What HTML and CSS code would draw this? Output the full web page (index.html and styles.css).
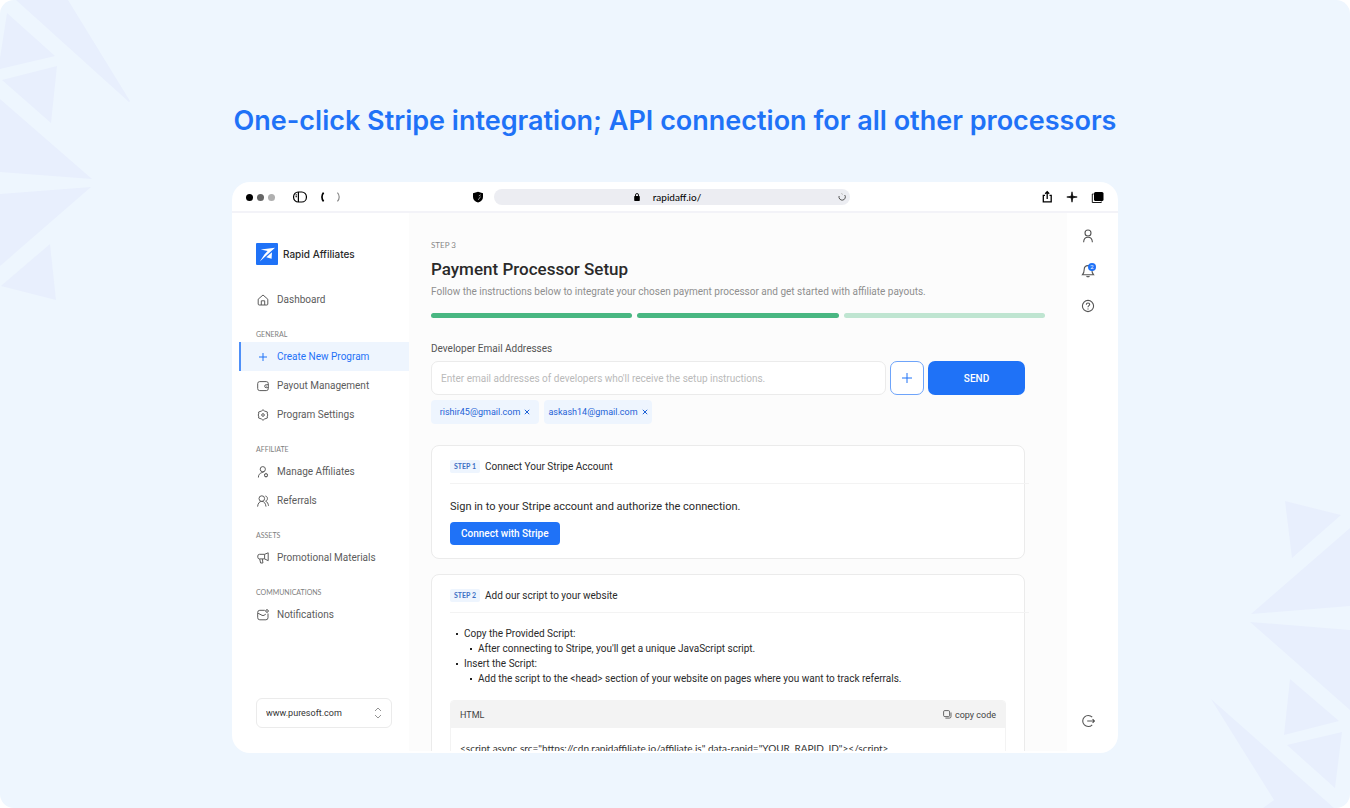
FILE: index.html
```html
<!DOCTYPE html>
<html lang="en">
<head>
<meta charset="utf-8">
<title>Rapid Affiliates – Payment Processor Setup</title>
<link rel="stylesheet" href="styles.css">
</head>
<body>
<div class="stage">
  <svg class="shards shards-left" viewBox="0 0 140 310" aria-hidden="true">
    <path d="M16 0H68L130 101 129 102ZM7 13 55 56 0 69V58ZM2 80 57 66 51 123ZM0 99 92 179 0 172ZM0 194 91 187 0 266ZM50 244 56 300 1 286Z"/>
  </svg>
  <svg class="shards shards-right" viewBox="0 0 160 328" aria-hidden="true">
    <path d="M95 21 151 35 102 78ZM160 48 61 134 160 126ZM60 142 160 150V230ZM100 199 149 241 94 255ZM97 265 152 252 145 308ZM21 219 84 320 73 328H144Z"/>
  </svg>

  <h1 class="headline">One-click Stripe integration; API connection for all other processors</h1>

  <div class="window">
    <header class="browser-bar">
      <div class="bar-left">
        <span class="dots"><i class="dot"></i><i class="dot dot-mid"></i><i class="dot dot-light"></i></span>
        <svg class="ico-panel" width="16" height="12" viewBox="0 0 16 12" fill="none" stroke="#000" stroke-width="1.2"><rect x="1.6" y="1" width="12.8" height="10" rx="4.6"/><path d="M6.4 1v10M3.6 3.8h1.2M3.6 5.6h1.2"/></svg>
        <svg class="ico-back" width="24" height="12" viewBox="0 0 24 12" fill="none" stroke="#000"><path d="M5.600 1.600C3.400 4 3.400 8 5.600 10.400" stroke-width="1.700"/><path d="M19.400 1.600C21.800 4 21.800 8 19.400 10.400" stroke="#888" stroke-width="1.200"/></svg>
      </div>
      <div class="bar-center">
        <svg width="12" height="12" viewBox="0 0 12 12"><path d="M6 .8 11 2.300V6C11 8.700 8.900 10.700 6 11.600 3.100 10.700 1 8.700 1 6V2.300Z"/><path d="M8.700 3.800 6.800 5M8.500 5.600 6.300 8.800" stroke="#fff" stroke-width=".6"/></svg>
        <div class="address">
          <span class="address-text">
            <svg width="8" height="10" viewBox="0 0 8 10"><rect x="1.200" y="4" width="5.600" height="5" rx=".7"/><path d="M2.500 4.400V3a1.500 1.500 0 0 1 3 0v1.400" fill="none" stroke="#000" stroke-width=".9"/></svg>
            rapidaff.io/
          </span>
          <svg class="ico-reload" width="10" height="10" viewBox="0 0 10 10" fill="none" stroke="#444" stroke-width=".9"><path d="M7.700 3A3.200 3.200 0 1 1 2.100 4"/><path d="M4.300 1.500 5.800 2.400" stroke="#aaa"/></svg>
        </div>
      </div>
      <div class="bar-right">
        <svg width="12" height="14" viewBox="0 0 12 14" fill="none" stroke="#000" stroke-width="1.300"><path d="M4 5.300H2.300v6.600h7.900V5.300H8.500M6.200 9V2M4.200 3.700l2-2 2 2"/></svg>
        <svg width="12" height="12" viewBox="0 0 12 12"><path d="M6 .8 6.800 5.200 11.200 6 6.800 6.800 6 11.200 5.200 6.800.8 6 5.200 5.200Z" stroke="#000" stroke-width=".7"/></svg>
        <svg width="13" height="13" viewBox="0 0 13 13"><rect x="3" y="1" width="9.500" height="9" rx="1.500"/><path d="M2.700 3H1.300v8.500h9V10.500" fill="none" stroke="#000" stroke-width=".9"/></svg>
      </div>
    </header>

    <div class="app">
      <aside class="sidebar">
        <div class="brand">
          <svg width="22" height="22" viewBox="0 0 22 22"><rect width="22" height="22" rx="1" fill="#1f72f7"/><path d="M4.700 6.500 19 4.800 11.200 11.800 3.800 18.400 8.600 11.200 11.600 8Z" fill="#fff"/><path d="M10.300 14.300 13.900 11 16 9.300 15.600 15.700Z" fill="#fff"/></svg>
          <span>Rapid Affiliates</span>
        </div>
        <nav class="nav">
          <a class="nav-item" href="#"><svg viewBox="0 0 12 12"><path d="M1.200 5.200 6 1l4.800 4.200V10q0 1-1 1H2.200q-1 0-1-1ZM4.300 11V6.800h3.400V11"/></svg>Dashboard</a>
          <h2 class="nav-label">GENERAL</h2>
          <a class="nav-item active" href="#"><svg viewBox="0 0 12 12"><path d="M6 2v8M2 6h8"/></svg>Create New Program</a>
          <a class="nav-item" href="#"><svg viewBox="0 0 12 12"><rect x=".7" y="1.600" width="10.600" height="9" rx="2"/><path d="M11.300 4.700H9.200a1.500 1.500 0 0 0 0 3h2.100M9 6.200h.7"/></svg>Payout Management</a>
          <a class="nav-item" href="#"><svg viewBox="0 0 12 12"><path d="M6 .7 7.500 2 10.400 3 10.200 5 11 6 10.200 7 10.400 9 7.500 10 6 11.300 4.500 10 1.600 9 1.800 7 1 6 1.800 5 1.600 3 4.500 2Z" stroke-linejoin="round"/><circle cx="6" cy="6" r="1.300"/></svg>Program Settings</a>
          <h2 class="nav-label">AFFILIATE</h2>
          <a class="nav-item" href="#"><svg viewBox="0 0 12 12"><circle cx="5.800" cy="3.200" r="2.600"/><path d="M1.400 11.500C1.400 8.600 2.600 7.600 4.800 6.600L7.300 5.600"/><circle cx="9" cy="9.200" r="1.500"/><path d="M9 6.900v.8M9 10.700v.8M7 8l.7.500M10.300 9.900l.7.500M7 10.400l.7-.5M10.300 8.500 11 8"/></svg>Manage Affiliates</a>
          <a class="nav-item" href="#"><svg viewBox="0 0 12 12"><circle cx="4.800" cy="3.600" r="2.800"/><path d="M.6 11.600C1 8 2.500 6.400 4.800 6.400S8.500 8 9 11.600M8.400 1C11.200 1.500 11 5.500 8.600 6.200 10.400 7 11.200 8.500 11.500 10.800"/></svg>Referrals</a>
          <h2 class="nav-label">ASSETS</h2>
          <a class="nav-item" href="#"><svg viewBox="0 0 12 12"><path d="M7.600 2.300H2.500Q.8 2.300.8 4v1.200q0 1.700 1.700 1.700h5.100M7.600 2.300 11.200.8v7.900L7.600 6.900ZM2.700 7l.9 4h2.300L5.400 7"/></svg>Promotional Materials</a>
          <h2 class="nav-label">COMMUNICATIONS</h2>
          <a class="nav-item" href="#"><svg viewBox="0 0 12 12"><path d="M7.800 1.300H2.800q-2.100 0-2.100 2.100v5.300q0 2.100 2.100 2.100h6.100q2.100 0 2.100-2.100V4.500M1 4.200 5 6.300q1 .5 2 0L8.800 5.200"/><circle cx="10" cy="2" r="1.300"/></svg>Notifications</a>
        </nav>
        <div class="site-picker">
          <select aria-label="Website"><option>www.puresoft.com</option></select>
          <svg width="8" height="12" viewBox="0 0 8 12" fill="none" stroke="#888" stroke-width=".9"><path d="M1 4 4 1 7 4M1 8l3 3 3-3"/></svg>
        </div>
      </aside>

      <main class="main">
        <p class="eyebrow">STEP 3</p>
        <h2 class="page-title">Payment Processor Setup</h2>
        <p class="page-sub">Follow the instructions below to integrate your chosen payment processor and get started with affiliate payouts.</p>
        <div class="progress"><span></span><span></span><span class="pending"></span></div>

        <div class="column">
          <label class="field-label" for="emails">Developer Email Addresses</label>
          <form class="email-row">
            <input id="emails" type="text" placeholder="Enter email addresses of developers who'll receive the setup instructions.">
            <button class="add" type="button" aria-label="Add email"><svg width="12" height="12" viewBox="0 0 12 12" stroke="#1f72f7" stroke-width="1"><path d="M6 1v10M1 6h10"/></svg></button>
            <button class="send" type="button">SEND</button>
          </form>
          <div class="chips">
            <button class="chip" type="button">rishir45@gmail.com <svg viewBox="0 0 6 6"><path d="M.8.8l4.400 4.400M5.200.8.8 5.200"/></svg></button>
            <button class="chip" type="button">askash14@gmail.com <svg viewBox="0 0 6 6"><path d="M.8.8l4.400 4.400M5.200.8.8 5.200"/></svg></button>
          </div>

          <section class="card">
            <div class="card-head"><span class="badge">STEP 1</span><h3>Connect Your Stripe Account</h3></div>
            <p class="lead">Sign in to your Stripe account and authorize the connection.</p>
            <button class="connect" type="button">Connect with Stripe</button>
          </section>

          <section class="card">
            <div class="card-head"><span class="badge">STEP 2</span><h3>Add our script to your website</h3></div>
            <ul class="steps">
              <li>Copy the Provided Script:
                <ul><li>After connecting to Stripe, you'll get a unique JavaScript script.</li></ul>
              </li>
              <li>Insert the Script:
                <ul><li>Add the script to the &lt;head&gt; section of your website on pages where you want to track referrals.</li></ul>
              </li>
            </ul>
            <div class="code">
              <div class="code-head"><span>HTML</span>
                <button class="copy" type="button"><svg width="9" height="9" viewBox="0 0 9 9" fill="none" stroke="#444" stroke-width=".8"><rect x=".6" y=".6" width="6" height="6" rx="1.200"/><path d="M8 2.500v4q0 1.600-1.600 1.600h-4"/></svg>copy code</button>
              </div>
              <pre><code>&lt;script async src="https://cdn.rapidaffiliate.io/affiliate.js" data-rapid="YOUR_RAPID_ID"&gt;&lt;/script&gt;</code></pre>
            </div>
          </section>
        </div>
      </main>

      <aside class="rail">
        <button type="button" aria-label="Profile"><svg viewBox="0 0 14 14"><circle cx="7" cy="4" r="3"/><path d="M2.600 13.200C2.800 9.800 4.400 8.300 7 8.300s4.200 1.500 4.400 4.900"/></svg></button>
        <button type="button" aria-label="Notifications" class="bell"><svg viewBox="0 0 14 14"><path d="M7 1.600C4.300 1.600 3.200 3.500 3.200 5.600c0 3-.6 3.800-1.800 5.200h11.200C11.400 9.400 10.800 8.600 10.800 5.600M5.500 12.200q1.500 1.200 3 0M7 1.600h1"/></svg><span class="count">2</span></button>
        <button type="button" aria-label="Help"><svg viewBox="0 0 14 14"><circle cx="7" cy="7" r="5.600"/><path d="M5.300 5.700C5.300 3.300 8.700 3.500 8.700 5.500 8.700 6.700 7 6.700 7 8.200M7 9.500v.9"/></svg></button>
        <button type="button" aria-label="Log out" class="logout"><svg viewBox="0 0 14 14"><path d="M11.200 3.200A5.500 5.500 0 1 0 11.200 10.800M6.200 7h7M11.600 5.200 13.400 7l-1.800 1.800"/></svg></button>
      </aside>
    </div>
  </div>
</div>
</body>
</html>
```

FILE: styles.css
```css
* { box-sizing: border-box; }

body {
  margin: 0;
  background: #fff;
  font-family: Roboto, "Liberation Sans", sans-serif;
  font-size: 10px;
  color: #2a2a2a;
}

h1, h2, h3, p, ul, pre { margin: 0; padding: 0; font-weight: 400; }
h3 { font-size: 10px; }
button, input, select { font: inherit; color: inherit; margin: 0; }
button { border: 0; background: none; padding: 0; cursor: pointer; }

.stage {
  position: relative;
  display: flex;
  flex-direction: column;
  gap: 41px;
  height: 100vh;
  padding: 101px 232px 55px;
  background: #eef6fe;
  border-radius: 14px;
  overflow: hidden;
}

.shards { position: absolute; fill: #e8effd; }
.shards-left { top: 0; left: 0; width: 140px; }
.shards-right { bottom: 0; right: 0; width: 160px; }

.headline {
  font-family: Inter, "Open Sans", sans-serif;
  font-size: 27px;
  font-weight: 600;
  line-height: 40px;
  color: #1f72f7;
  white-space: nowrap;
  display: flex;
  justify-content: center;
}

.window {
  position: relative;
  flex: 1;
  min-height: 0;
  display: flex;
  flex-direction: column;
  padding-bottom: 2px;
  background: #fff;
  border-radius: 18px;
  overflow: hidden;
}

.browser-bar {
  flex: none;
  display: grid;
  grid-template-columns: 240fr 378fr 268fr;
  align-items: center;
  height: 31px;
  padding-top: 1px;
  border-bottom: 2px solid #f3f3f8;
}
.bar-left { display: flex; align-items: center; padding-left: 14px; }
.dots { display: flex; gap: 4px; margin-right: 17px; }
.dot { width: 7px; height: 7px; border-radius: 50%; background: #000; }
.dot-mid { background: #666; }
.dot-light { background: #b0b0b0; }
.ico-back { margin-left: 10px; }
.bar-center { display: flex; align-items: center; gap: 10px; }
.address {
  flex: 1;
  display: flex;
  align-items: center;
  height: 16px;
  padding: 0 3px;
  border-radius: 8px;
  background: #ecedf2;
  font-family: Lato, sans-serif;
  font-size: 10px;
  color: #000;
}
.address-text { flex: 1; display: flex; align-items: center; justify-content: center; gap: 12px; }
.bar-right { display: flex; align-items: center; justify-content: flex-end; gap: 13px; padding-right: 14px; }

.app { flex: 1; min-height: 0; display: flex; }

.sidebar {
  flex: none;
  width: 177px;
  display: flex;
  flex-direction: column;
  padding: 30px 0 23px;
}
.brand {
  display: flex;
  align-items: center;
  gap: 5px;
  padding-left: 24px;
  font-family: Inter, sans-serif;
  font-weight: 500;
  font-size: 10px;
}
.nav { margin-top: 20px; padding-left: 7px; }
.nav-item {
  display: flex;
  align-items: center;
  gap: 8px;
  height: 29px;
  padding-left: 16px;
  border-left: 2px solid transparent;
  color: #5c5c5c;
  text-decoration: none;
}
.nav-item svg { width: 12px; height: 12px; fill: none; stroke: currentColor; stroke-width: 1; }
.nav-item.active { border-color: #4f90f8; background: #eef5fe; color: #1f72f7; }
.nav-label {
  margin: 15px 0 2px 17px;
  font-family: Lato, sans-serif;
  font-size: 7px;
  line-height: 11px;
  color: #808080;
}
.site-picker { position: relative; margin: auto 17px 0 24px; }
.site-picker select {
  appearance: none;
  display: block;
  width: 100%;
  height: 30px;
  padding: 0 9px;
  border: 1px solid #ebebeb;
  border-radius: 6px;
  background: #fff;
  font-size: 9px;
  color: #333;
}
.site-picker svg { position: absolute; right: 10px; top: 9px; pointer-events: none; }

.main {
  flex: 1;
  min-width: 0;
  padding: 26px 22px 0;
  background: #fcfcfc;
  overflow: hidden;
}
.eyebrow { font-family: Lato, sans-serif; font-size: 8px; line-height: 12px; color: #888; }
.page-title { margin-top: 8px; font-size: 17px; font-weight: 500; line-height: 20px; }
.page-sub { margin-top: 6px; line-height: 14px; color: #8f8f8f; white-space: nowrap; }
.progress { display: flex; gap: 5px; margin-top: 14px; }
.progress span { flex: 1; height: 5px; border-radius: 3px; background: #49b782; }
.progress .pending { background: #bfe5d1; }

.column { margin: 24px 20px 0 0; }
.field-label { display: block; line-height: 14px; color: #555; }
.email-row { display: flex; gap: 4px; margin-top: 5px; }
.email-row input {
  flex: 1;
  min-width: 0;
  height: 34px;
  padding: 0 9px;
  border: 1px solid #ebebeb;
  border-radius: 7px;
  background: #fff;
}
.email-row input::placeholder { color: #bababa; }
.add {
  display: grid;
  place-items: center;
  width: 34px;
  border: 1px solid #6ea4fa;
  border-radius: 7px;
  background: #fff;
}
.send { width: 97px; border-radius: 7px; background: #1f72f7; color: #fff; font-weight: 500; }

.chips { display: flex; gap: 5px; margin-top: 5px; }
.chip {
  display: flex;
  align-items: center;
  justify-content: center;
  gap: 4px;
  width: 108px;
  height: 24px;
  border-radius: 4px;
  background: #eef5fe;
  font-size: 9px;
  color: #1d62d6;
}
.chip svg { width: 6px; height: 6px; fill: none; stroke: currentColor; stroke-width: 1; }

.card {
  margin-top: 15px;
  padding: 0 18px 13px;
  border: 1px solid #ebebeb;
  border-radius: 8px;
  background: #fff;
}
.chips + .card { margin-top: 21px; }
.card-head {
  display: flex;
  align-items: center;
  gap: 5px;
  height: 38px;
  margin-right: -23px;
  padding-top: 4px;
  border-bottom: 1px solid #f3f3f3;
}
.badge {
  width: 30px;
  border-radius: 2px;
  background: #eef5fe;
  font-family: Lato, sans-serif;
  font-size: 7px;
  font-weight: 700;
  line-height: 13px;
  text-align: center;
  color: #3d6fc4;
}
.lead { margin-top: 15px; font-size: 11px; line-height: 16px; }
.connect {
  height: 23px;
  margin-top: 7px;
  padding: 0 11px;
  border-radius: 4px;
  background: #1f72f7;
  color: #fff;
  font-weight: 500;
  display: block;
}

.steps { margin-top: 13px; line-height: 15px; list-style: none; }
.steps ul { list-style: none; }
.steps li { padding-left: 14px; }
.steps li::before {
  content: "";
  float: left;
  width: 2px;
  height: 2px;
  margin: 7px 0 0 -8px;
  background: #222;
}
.code { margin-top: 14px; border: 1px solid #f3f3f3; border-radius: 4px; overflow: hidden; }
.code-head {
  display: flex;
  align-items: center;
  justify-content: space-between;
  height: 27px;
  padding: 0 9px;
  background: #f3f3f3;
  font-size: 9px;
  color: #444;
}
.copy { display: flex; align-items: center; gap: 3px; }
.code pre { padding: 13px 9px; line-height: 15px; }
.code code { font-family: Lato, sans-serif; font-size: 10px; color: #333; }

.rail {
  flex: none;
  width: 51px;
  display: flex;
  flex-direction: column;
  align-items: center;
  gap: 21px;
  padding: 16px 9px 23px 0;
}
.rail button { position: relative; width: 14px; height: 14px; }
.rail svg { display: block; width: 14px; height: 14px; fill: none; stroke: #555; stroke-width: 1.100; }
.count {
  position: absolute;
  top: -1px;
  right: -1px;
  width: 8px;
  height: 8px;
  border-radius: 50%;
  background: #1f72f7;
  color: #fff;
  font-size: 6px;
  line-height: 8px;
  text-align: center;
}
.rail .logout { margin-top: auto; }
```
